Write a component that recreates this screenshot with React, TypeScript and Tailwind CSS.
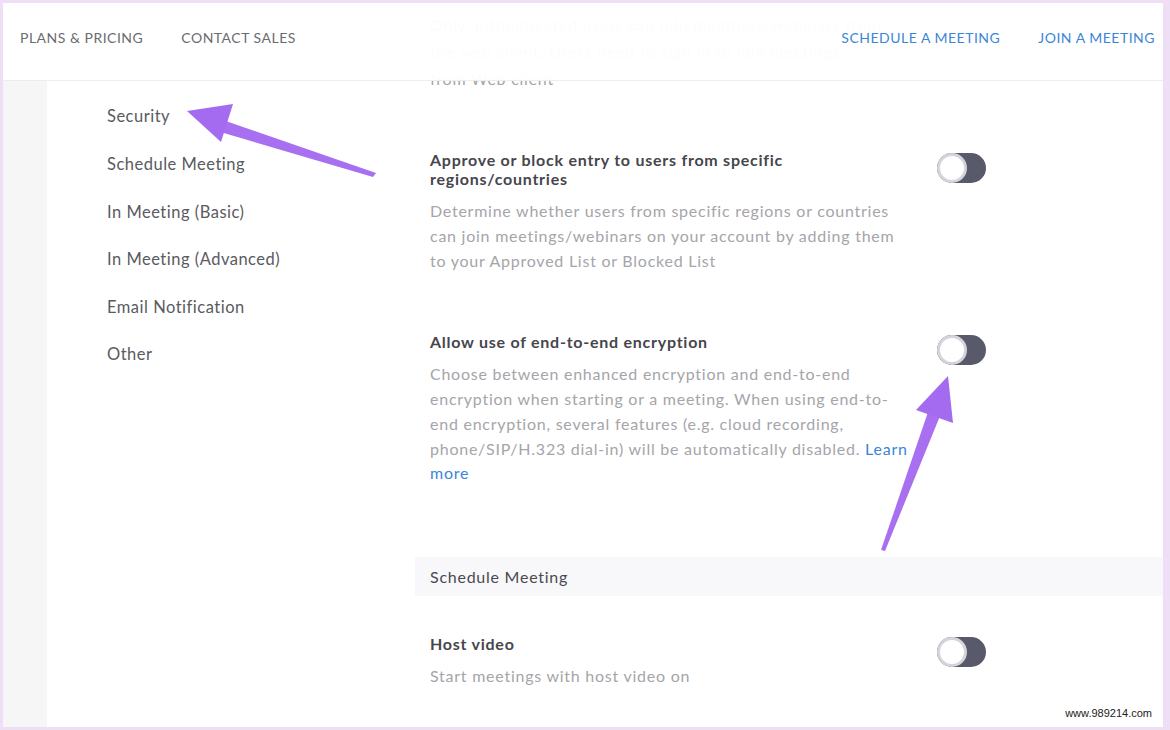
import React from 'react';

const font = { fontFamily: 'Lato, "Open Sans", sans-serif' };

function Toggle() {
  return (
    <div className="mt-[3px] ml-[17px] w-[49px] h-[30px] rounded-full bg-[#585a6c] flex items-center shrink-0">
      <div className="w-[30px] h-[30px] rounded-full bg-white border-[3px] border-[#d4d4da]" />
    </div>
  );
}

interface SettingProps {
  title: React.ReactNode;
  children: React.ReactNode;
  className?: string;
}

function Setting({ title, children, className = '' }: SettingProps) {
  return (
    <div className={`flex items-start pl-[15px] ${className}`}>
      <div className="w-[490px] shrink-0">
        <div className="text-[16px] leading-[19px] font-bold tracking-[0.75px] text-[#46464c]">{title}</div>
        <div className="mt-[11px] text-[16px] leading-[24.75px] tracking-[0.75px] text-[#a5a5aa] whitespace-nowrap">
          {children}
        </div>
      </div>
      <Toggle />
    </div>
  );
}

const menu = ['Security', 'Schedule Meeting', 'In Meeting (Basic)', 'In Meeting (Advanced)', 'Email Notification', 'Other'];

export default function App() {
  return (
    <div className="w-[1170px] h-[730px] bg-[#eedff6] pt-[3px] pl-[3px] pr-[7px] pb-[3px]" style={font}>
      <div className="relative w-full h-full bg-white overflow-hidden flex">
        {/* top nav, translucent over scrolled content */}
        <div className="absolute top-0 left-0 right-0 h-[78px] bg-white/[0.96] border-b border-[#ededed] z-10 flex items-center justify-between pl-[17px] pr-[8px] text-[14px] tracking-[0.5px] pb-[9px]">
          <div className="flex items-center gap-[38px] text-[#6b6b70]">
            <span>PLANS &amp; PRICING</span>
            <span>CONTACT SALES</span>
          </div>
          <div className="flex items-center gap-[38px] text-[#3b86d6]">
            <span>SCHEDULE A MEETING</span>
            <span>JOIN A MEETING</span>
          </div>
        </div>

        <div className="w-[44px] shrink-0 bg-[#f6f6f7]" />

        <div className="w-[368px] shrink-0 pt-[90px] pl-[60px]">
          {menu.map((m) => (
            <div key={m} className="h-[47.6px] flex items-center text-[16.5px] tracking-[0.5px] text-[#5a5a60]">
              {m}
            </div>
          ))}
        </div>

        <div className="flex-1 pt-[8px]">
          <div className="pl-[15px] text-[16px] leading-[27px] tracking-[0.75px] text-[#a5a5aa] whitespace-nowrap">
            Only authenticated users can join meetings/webinars from
            <br />
            the web client. Users need to sign in to join meetings
            <br />
            from Web client
          </div>

          <Setting
            className="mt-[58px]"
            title={
              <>
                Approve or block entry to users from specific
                <br />
                regions/countries
              </>
            }
          >
            Determine whether users from specific regions or countries
            <br />
            can join meetings/webinars on your account by adding them
            <br />
            to your Approved List or Blocked List
          </Setting>

          <Setting className="mt-[59px]" title="Allow use of end-to-end encryption">
            Choose between enhanced encryption and end-to-end
            <br />
            encryption when starting or a meeting. When using end-to-
            <br />
            end encryption, several features (e.g. cloud recording,
            <br />
            phone/SIP/H.323 dial-in) will be automatically disabled. <span className="text-[#3b86d6]">Learn</span>
            <br />
            <span className="text-[#3b86d6]">more</span>
          </Setting>

          <div className="mt-[71px] h-[39px] bg-[#f8f8fa] flex items-center pl-[15px] text-[16px] tracking-[0.75px] text-[#4a4a50]">
            Schedule Meeting
          </div>

          <Setting className="mt-[38px]" title="Host video">
            Start meetings with host video on
          </Setting>
        </div>

        {/* annotation arrows */}
        <svg className="absolute inset-0 z-20 pointer-events-none" width="1160" height="724">
          <polygon points="373,170 370,174 214,128 217,116" fill="#a870f0" />
          <polygon points="184,108 230,101 218,139" fill="#a46bf0" />
          <polygon points="882,548 878,547 925,409 937,413" fill="#a870f0" />
          <polygon points="945,373 950,420 913,407" fill="#a46bf0" />
        </svg>

        <div
          className="absolute bottom-[6px] right-[11px] text-[11px] text-[#222]"
          style={{ fontFamily: '"Liberation Sans", Arial, sans-serif' }}
        >
          www.989214.com
        </div>
      </div>
    </div>
  );
}
